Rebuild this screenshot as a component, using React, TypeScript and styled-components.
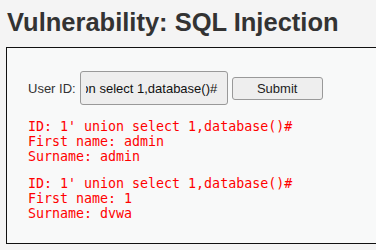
import React, { useEffect, useRef } from 'react';
import styled, { createGlobalStyle } from 'styled-components';

const GlobalStyle = createGlobalStyle`
    html, body {
        margin: 0;
        padding: 0;
        background-color: #F4F4F4;
        overflow: hidden;
    }
    body {
        font-family: "Liberation Sans", Arial, sans-serif;
    }
`;

const Page = styled.div`
    width: 376px;
    height: 250px;
    padding: 0 0 0 6px;
    box-sizing: border-box;
    overflow: hidden;
`;

const Title = styled.h1`
    margin: 0;
    padding: 7px 0 0 1px;
    height: 47px;
    box-sizing: border-box;
    font-family: "Liberation Sans", Arial, sans-serif;
    font-size: 25.5px;
    font-weight: bold;
    line-height: 30px;
    color: #333333;
`;

const Box = styled.div`
    width: 420px;
    height: 197px;
    box-sizing: border-box;
    border: 1px solid #111111;
    background-color: #F8F9F9;
    padding: 23px 0 0 21px;
`;

const Form = styled.form`
    display: flex;
    align-items: center;
    gap: 4px;
    height: 34px;
`;

const Label = styled.label`
    font-size: 13px;
    color: #333333;
`;

const Input = styled.input`
    width: 148px;
    height: 34px;
    box-sizing: border-box;
    border: 1px solid #999999;
    border-radius: 3px;
    background-color: #EEEEEE;
    padding: 0 9px 0 5px;
    font-family: "Liberation Sans", Arial, sans-serif;
    font-size: 13px;
    color: #111111;
    outline: none;
`;

const Button = styled.button`
    width: 91px;
    height: 23px;
    box-sizing: border-box;
    border: 1px solid #999999;
    border-radius: 3px;
    background-color: #EEEEEE;
    font-family: "Liberation Sans", Arial, sans-serif;
    font-size: 13px;
    color: #222222;
    padding: 0;
`;

const Result = styled.pre`
    margin: 14px 0 0 0;
    font-family: "DejaVu Sans Mono", monospace;
    font-size: 13.3px;
    line-height: 15px;
    color: #FF0000;
    & + & {
        margin-top: 12px;
    }
`;

const rows = [
    { first: 'admin', last: 'admin' },
    { first: '1', last: 'dvwa' },
];

const query = "1' union select 1,database()#";

export default function App() {
    const ref = useRef<HTMLInputElement>(null);

    useEffect(() => {
        if (ref.current) ref.current.scrollLeft = ref.current.scrollWidth;
    }, []);

    return (
        <Page>
            <GlobalStyle />
            <Title>Vulnerability: SQL Injection</Title>
            <Box>
                <Form onSubmit={(e) => e.preventDefault()}>
                    <Label>User ID:</Label>
                    <Input ref={ref} type="text" defaultValue={query} />
                    <Button type="submit">Submit</Button>
                </Form>
                {rows.map((r, i) => (
                    <Result key={i}>
                        {`ID: ${query}\nFirst name: ${r.first}\nSurname: ${r.last}`}
                    </Result>
                ))}
            </Box>
        </Page>
    );
}
